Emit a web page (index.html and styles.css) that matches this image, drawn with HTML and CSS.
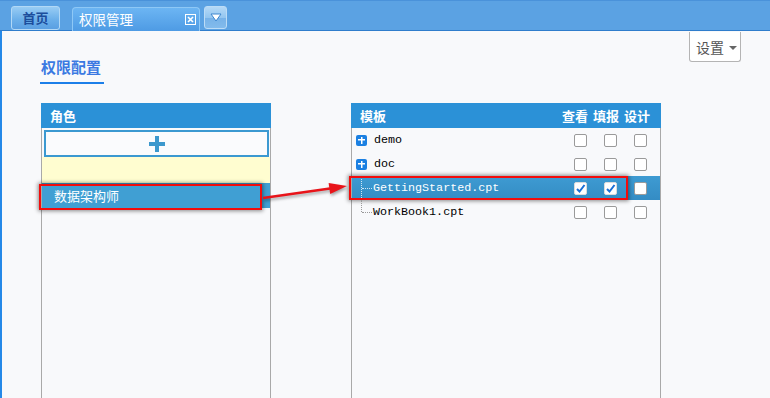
FILE: index.html
```html
<!DOCTYPE html>
<html lang="zh-CN">
<head>
  <meta charset="UTF-8" />
  <title>权限管理</title>
  <link rel="stylesheet" href="styles.css">
</head>
<body>

  <!-- Tab bar -->
  <div class="topbar">
    <div class="tab tab-home">首页</div>
    <div class="tab tab-active">
      <span>权限管理</span>
      <svg class="tab-close" width="11" height="11" viewBox="0 0 11 11">
        <rect x="0.5" y="0.5" width="10" height="10" fill="none" stroke="#fff" />
        <path d="M3 3 L8 8 M8 3 L3 8" stroke="#fff" stroke-width="1.6" />
      </svg>
    </div>
    <div class="tab-menu">
      <svg width="12" height="9" viewBox="0 0 12 9">
        <path d="M1 1 L11 1 L6 8 Z" fill="#fff" stroke="#3c86cf" stroke-width="1" />
      </svg>
    </div>
  </div>

  <div class="main">
    <div class="page-head">
      <div class="page-title">权限配置</div>
      <div class="settings">设置<span class="caret"></span></div>
    </div>

    <div class="panels">
      <!-- Roles -->
      <div class="panel panel-roles">
        <div class="panel-header">角色</div>
        <div class="add-role">
          <svg width="16" height="16" viewBox="0 0 16 16">
            <path d="M6 0 H10 V6 H16 V10 H10 V16 H6 V10 H0 V6 H6 Z" fill="#3c98cd" />
          </svg>
        </div>
        <div class="role-gap"></div>
        <div class="role-row">数据架构师<span class="mark mark-role"></span></div>
      </div>

      <!-- Templates -->
      <div class="panel panel-tpl">
        <div class="panel-header tpl-header">
          <span>模板</span>
          <span class="cols"><span>查看</span><span>填报</span><span>设计</span></span>
        </div>
        <div class="tree">
          <div class="tree-row">
            <div class="name"><span class="expand"></span>demo</div>
            <span class="cell"><span class="cb"></span></span>
            <span class="cell"><span class="cb"></span></span>
            <span class="cell"><span class="cb"></span></span>
          </div>
          <div class="tree-row">
            <div class="name"><span class="expand"></span>doc</div>
            <span class="cell"><span class="cb"></span></span>
            <span class="cell"><span class="cb"></span></span>
            <span class="cell"><span class="cb"></span></span>
          </div>
          <div class="tree-row selected">
            <div class="name"><span class="branch first"></span>GettingStarted.cpt</div>
            <span class="cell"><span class="cb checked"></span></span>
            <span class="cell"><span class="cb checked"></span></span>
            <span class="cell"><span class="cb"></span></span>
            <span class="mark mark-tpl"></span>
          </div>
          <div class="tree-row">
            <div class="name"><span class="branch last"></span>WorkBook1.cpt</div>
            <span class="cell"><span class="cb"></span></span>
            <span class="cell"><span class="cb"></span></span>
            <span class="cell"><span class="cb"></span></span>
          </div>
        </div>
      </div>
    </div>
  </div>

  <!-- annotation arrow -->
  <svg class="arrow" width="770" height="398" viewBox="0 0 770 398">
    <line x1="263" y1="198" x2="330" y2="188.5" stroke="#e8141a" stroke-width="2.5" />
    <polygon points="347,186 330.2,194 328.6,183" fill="#e8141a" />
  </svg>

</body>
</html>
```

FILE: styles.css
```css
body {
  margin: 0;
  width: 770px;
  height: 398px;
  overflow: hidden;
  position: relative;
  font-family: "Noto Sans CJK SC", "Noto Sans", sans-serif;
  background: #f8f9fb;
}

/* tab bar */
.topbar {
  height: 31px;
  display: flex;
  align-items: flex-end;
  padding-left: 11px;
  background: #5ba2e3;
  border-top: 1px solid #4a92da;
  border-bottom: 1px solid #2f7dcc;
  box-sizing: border-box;
}

.tab {
  font-size: 13px;
  line-height: 21px;
  box-sizing: border-box;
}

.tab-home {
  width: 49px;
  height: 24px;
  text-align: center;
  color: #1c4e9c;
  font-weight: bold;
  background: linear-gradient(#98ccf4, #6cb0ea 55%, #5a9fe2);
  border: 1px solid #b2d8f6;
  border-radius: 3px;
}

.tab-active {
  width: 128px;
  height: 24px;
  margin-left: 12px;
  margin-bottom: -1px;
  display: flex;
  align-items: center;
  justify-content: space-between;
  padding: 0 3px 0 6px;
  font-size: 13.5px;
  color: #fff;
  background: linear-gradient(#6cb5f3, #4e9be4);
  border: 1px solid #8ec8f6;
  border-bottom: none;
  border-radius: 4px 4px 0 0;
}

.tab-close {
  display: block;
}

.tab-menu {
  width: 23px;
  height: 23px;
  margin-left: 4px;
  margin-bottom: 1px;
  box-sizing: border-box;
  display: flex;
  align-items: center;
  justify-content: center;
  background: linear-gradient(#b4d9f7, #94c6f0 50%, #77b2e8 51%, #82bbec);
  border: 1px solid #bcdcf6;
  border-radius: 3px;
}

/* main */
.main {
  height: 367px;
  border-left: 2px solid #2589e8;
  background: #f8f9fb;
}

.page-head {
  display: flex;
  justify-content: space-between;
  align-items: flex-start;
  padding: 0 29px 0 38px;
}

.page-title {
  margin-top: 26px;
  padding: 0 3px 5px 1px;
  font-size: 15px;
  line-height: 20px;
  font-weight: bold;
  color: #3b79e2;
  border-bottom: 2px solid #1c7fe9;
}

.settings {
  margin-top: 1px;
  width: 52px;
  height: 30px;
  box-sizing: border-box;
  display: flex;
  align-items: center;
  padding-left: 6px;
  font-size: 14px;
  color: #555;
  background: #fff;
  border: 1px solid #b4b4b4;
  border-top: none;
  border-radius: 0 0 3px 3px;
}

.caret {
  margin-left: 5px;
  margin-top: 2px;
  border-left: 4px solid transparent;
  border-right: 4px solid transparent;
  border-top: 4px solid #666;
}

/* panels */
.panels {
  display: flex;
  margin-top: 19px;
  margin-left: 39px;
}

.panel {
  height: 300px;
  box-sizing: border-box;
  border: 1px solid #a9a9a9;
  border-top: none;
}

.panel-roles {
  width: 230px;
}

.panel-tpl {
  width: 310px;
  margin-left: 80px;
}

.panel-header {
  height: 25px;
  margin: 0 -1px;
  padding-left: 9px;
  display: flex;
  align-items: center;
  font-size: 13px;
  font-weight: bold;
  color: #fff;
  background: #2b91d7;
}

.tpl-header {
  justify-content: space-between;
  padding-right: 11px;
}

.cols {
  display: flex;
  gap: 5px;
}

.add-role {
  height: 27px;
  margin: 2px 1px 0 2px;
  box-sizing: border-box;
  display: flex;
  align-items: center;
  justify-content: center;
  background: #fafbfd;
  border: 2px solid #3b99d1;
}

.role-gap {
  height: 26px;
  background: #fffdd0;
}

.role-row {
  position: relative;
  height: 25px;
  padding-left: 12px;
  display: flex;
  align-items: center;
  font-size: 13px;
  color: #fff;
  background: #409fd3;
}

.mark {
  position: absolute;
  border: 2px solid #f20c0c;
  box-shadow: 0 0 4px 1px rgba(0, 0, 0, 0.45);
  box-sizing: border-box;
}

.mark-role {
  left: -3px;
  top: 1px;
  width: 223px;
  height: 26px;
}

.mark-tpl {
  left: -3px;
  top: 0;
  width: 279px;
  height: 24px;
}

/* template tree */
.tree-row {
  position: relative;
  height: 24px;
  display: flex;
  align-items: center;
  padding-right: 5px;
  font-family: "Liberation Mono", monospace;
  font-size: 11.7px;
  color: #000;
}

.tree-row.selected {
  color: #fff;
  background: linear-gradient(#3e9bd2, #348cc4);
}

.name {
  flex: 1;
  display: flex;
  align-items: center;
  height: 100%;
  padding-left: 4px;
}

.expand {
  width: 11px;
  height: 11px;
  margin-right: 7px;
  border-radius: 2px;
  background:
    linear-gradient(#fff, #fff) center / 7px 1.5px no-repeat,
    linear-gradient(#fff, #fff) center / 1.5px 7px no-repeat,
    #1b80e2;
}

.branch {
  position: relative;
  width: 17px;
  height: 100%;
}

.branch::before {
  content: "";
  position: absolute;
  left: 5px;
  top: 0;
  height: 100%;
  border-left: 1px dotted #9a9a9a;
}

.branch.last::before {
  height: 50%;
}

.branch::after {
  content: "";
  position: absolute;
  left: 6px;
  width: 10px;
  top: 50%;
  border-top: 1px dotted #9a9a9a;
}

.selected .branch::before,
.selected .branch::after {
  border-color: #cfe6f5;
}

.cell {
  width: 30px;
  display: flex;
  justify-content: center;
}

.cb {
  width: 13px;
  height: 13px;
  box-sizing: border-box;
  border: 1px solid #9a9a9a;
  border-radius: 2px;
  background: #fff;
}

.cb.checked {
  border-color: #dcdcdc;
  background: #fff url("data:image/svg+xml;utf8,<svg xmlns='http://www.w3.org/2000/svg' width='11' height='11'><path d='M2 6 L4.5 8.5 L9.5 2' fill='none' stroke='%231a6fd6' stroke-width='2'/></svg>") center no-repeat;
}

.arrow {
  position: absolute;
  left: 0;
  top: 0;
  pointer-events: none;
  filter: drop-shadow(1px 2px 1.5px rgba(0, 0, 0, 0.35));
}
```
